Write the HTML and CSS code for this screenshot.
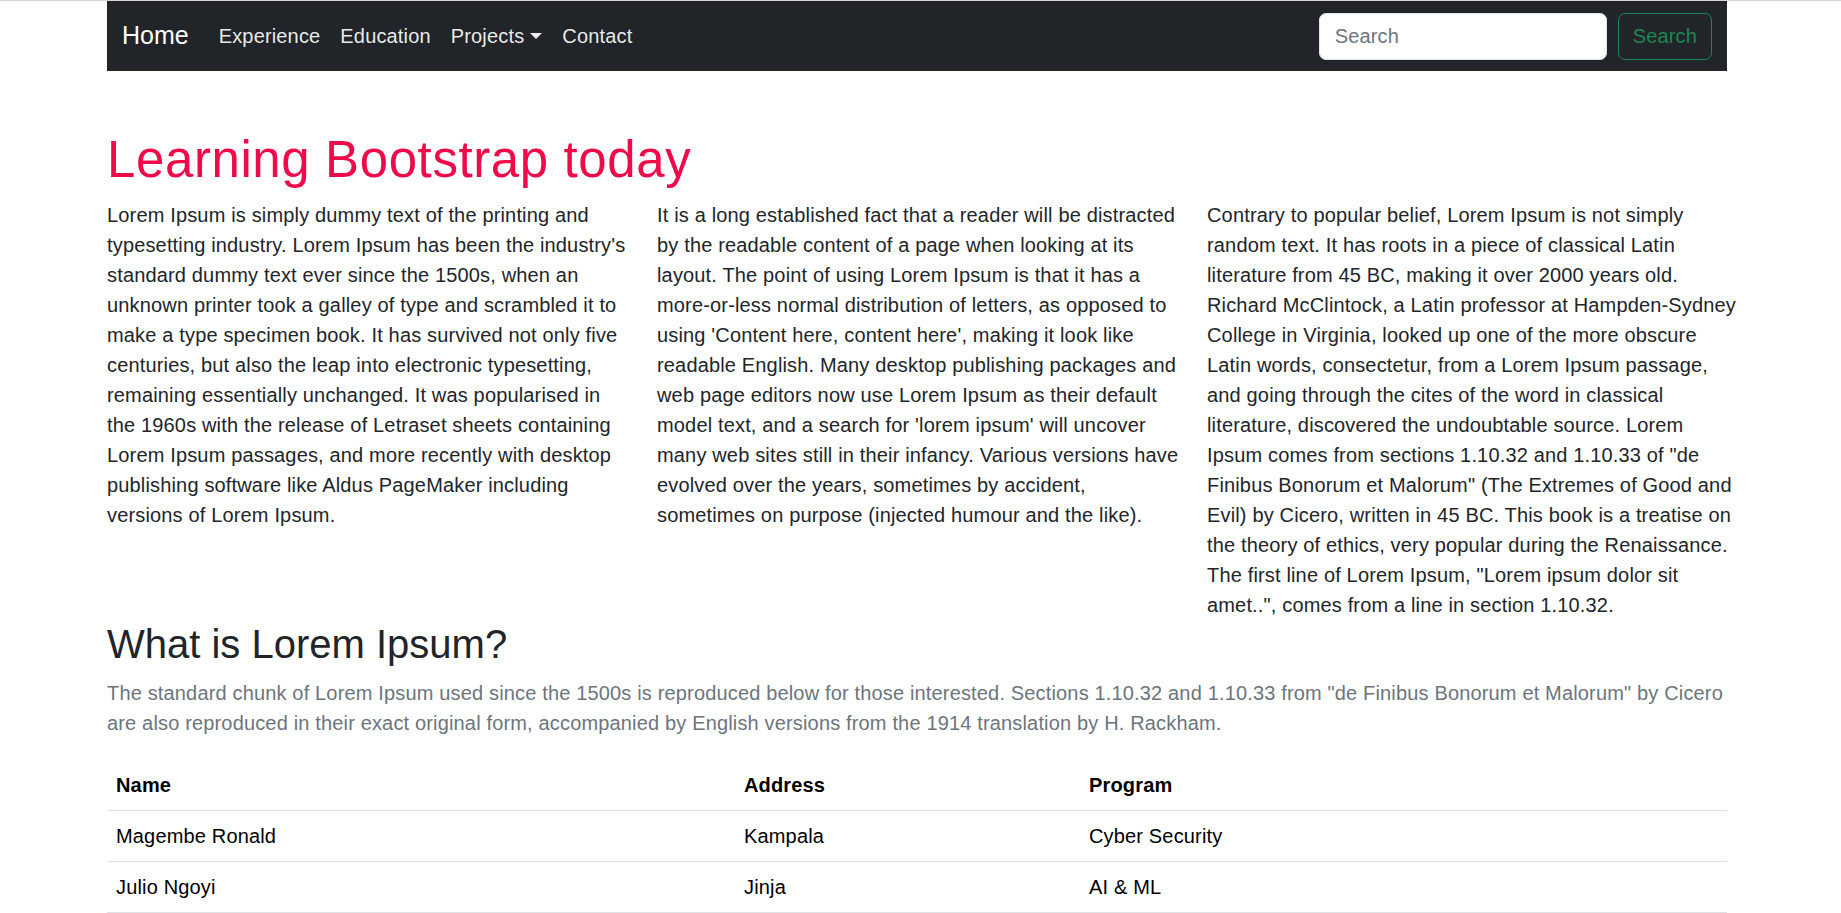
FILE: index.html
```html
<!DOCTYPE html>
<html lang="en">
<head>
<meta charset="utf-8">
<title>Learning Bootstrap</title>
<link rel="stylesheet" href="styles.css">
</head>
<body>
<div class="container">
  <nav class="navbar">
    <a class="brand" href="#">Home</a>
    <ul class="nav-links">
      <li><a class="nav-link" href="#">Experience</a></li>
      <li><a class="nav-link" href="#">Education</a></li>
      <li><a class="nav-link dropdown-toggle" href="#">Projects</a></li>
      <li><a class="nav-link" href="#">Contact</a></li>
    </ul>
    <form class="search-form">
      <input class="search-input" type="search" placeholder="Search">
      <button class="search-btn" type="button">Search</button>
    </form>
  </nav>

  <main class="content">
    <h1 class="title">Learning Bootstrap today</h1>
    <div class="row">
      <p class="col">Lorem Ipsum is simply dummy text of the printing and<br>
typesetting industry. Lorem Ipsum has been the industry's<br>
standard dummy text ever since the 1500s, when an<br>
unknown printer took a galley of type and scrambled it to<br>
make a type specimen book. It has survived not only five<br>
centuries, but also the leap into electronic typesetting,<br>
remaining essentially unchanged. It was popularised in<br>
the 1960s with the release of Letraset sheets containing<br>
Lorem Ipsum passages, and more recently with desktop<br>
publishing software like Aldus PageMaker including<br>
versions of Lorem Ipsum.</p>
      <p class="col">It is a long established fact that a reader will be distracted<br>
by the readable content of a page when looking at its<br>
layout. The point of using Lorem Ipsum is that it has a<br>
more-or-less normal distribution of letters, as opposed to<br>
using 'Content here, content here', making it look like<br>
readable English. Many desktop publishing packages and<br>
web page editors now use Lorem Ipsum as their default<br>
model text, and a search for 'lorem ipsum' will uncover<br>
many web sites still in their infancy. Various versions have<br>
evolved over the years, sometimes by accident,<br>
sometimes on purpose (injected humour and the like).</p>
      <p class="col">Contrary to popular belief, Lorem Ipsum is not simply<br>
random text. It has roots in a piece of classical Latin<br>
literature from 45 BC, making it over 2000 years old.<br>
Richard McClintock, a Latin professor at Hampden-Sydney<br>
College in Virginia, looked up one of the more obscure<br>
Latin words, consectetur, from a Lorem Ipsum passage,<br>
and going through the cites of the word in classical<br>
literature, discovered the undoubtable source. Lorem<br>
Ipsum comes from sections 1.10.32 and 1.10.33 of "de<br>
Finibus Bonorum et Malorum" (The Extremes of Good and<br>
Evil) by Cicero, written in 45 BC. This book is a treatise on<br>
the theory of ethics, very popular during the Renaissance.<br>
The first line of Lorem Ipsum, "Lorem ipsum dolor sit<br>
amet..", comes from a line in section 1.10.32.</p>
    </div>

    <h2 class="subtitle">What is Lorem Ipsum?</h2>
    <p class="muted">The standard chunk of Lorem Ipsum used since the 1500s is reproduced below for those interested. Sections 1.10.32 and 1.10.33 from "de Finibus Bonorum et Malorum" by Cicero are also reproduced in their exact original form, accompanied by English versions from the 1914 translation by H. Rackham.</p>

    <table class="table">
      <thead>
        <tr><th class="c-name">Name</th><th class="c-addr">Address</th><th>Program</th></tr>
      </thead>
      <tbody>
        <tr><td>Magembe Ronald</td><td>Kampala</td><td>Cyber Security</td></tr>
        <tr><td>Julio Ngoyi</td><td>Jinja</td><td>AI &amp; ML</td></tr>
      </tbody>
    </table>
  </main>
</div>
</body>
</html>
```

FILE: styles.css
```css
* { box-sizing: border-box; }

html {
  border-top: 1px solid #d4d4d4;
}

body {
  margin: 0;
  font-family: "Liberation Sans", Arial, sans-serif;
  font-size: 20px;
  line-height: 1.5;
  color: #212529;
  background: #fff;
  letter-spacing: 0.16px;
}

.container {
  width: 1620px;
  margin-left: 107px;
}

/* Navbar */
.navbar {
  display: flex;
  align-items: center;
  height: 70px;
  padding: 0 15px;
  background: #212529;
}

.brand {
  font-size: 25px;
  color: #fff;
  text-decoration: none;
  margin-right: 20px;
  letter-spacing: 0;
}

.nav-links {
  display: flex;
  list-style: none;
  margin: 0;
  padding: 0;
  flex: 1;
}

.nav-link {
  display: block;
  padding: 8px 10px;
  color: rgba(255, 255, 255, 0.92);
  text-decoration: none;
}

.dropdown-toggle::after {
  content: "";
  display: inline-block;
  margin-left: 6px;
  vertical-align: 4px;
  border-top: 6px solid;
  border-left: 6px solid transparent;
  border-right: 6px solid transparent;
}

.search-form {
  display: flex;
  align-items: center;
}

.search-input {
  width: 288px;
  height: 47px;
  padding: 7px 15px;
  margin-right: 11px;
  font: inherit;
  letter-spacing: 0.16px;
  color: #212529;
  background: #fff;
  border: 1px solid #dee2e6;
  border-radius: 7px;
}

.search-input::placeholder { color: #6c757d; }

.search-btn {
  height: 47px;
  padding: 7px 14px;
  font: inherit;
  letter-spacing: 0.16px;
  color: #198754;
  background: transparent;
  border: 1px solid #198754;
  border-radius: 7px;
}

/* Content */
.content {
  padding-top: 58px;
}

.title {
  margin: 0 0 10px;
  font-size: 51px;
  font-weight: 400;
  line-height: 1.2;
  letter-spacing: 0.6px;
  color: #ef0a4a;
}

.row {
  display: grid;
  grid-template-columns: repeat(3, 520px);
  column-gap: 30px;
}

.col {
  margin: 0;
  white-space: nowrap;
}

.subtitle {
  margin: 0 0 10px;
  font-size: 40px;
  font-weight: 400;
  line-height: 1.2;
  letter-spacing: 0;
}

.muted {
  margin: 0 0 22px;
  color: #6c757d;
}

.table {
  width: 100%;
  border-collapse: collapse;
}

.table th,
.table td {
  padding: 10px 9px;
  text-align: left;
  border-bottom: 1px solid #dee2e6;
  color: #000;
}

.table th { font-weight: 700; }

.c-name { width: 628px; }
.c-addr { width: 345px; }
```
